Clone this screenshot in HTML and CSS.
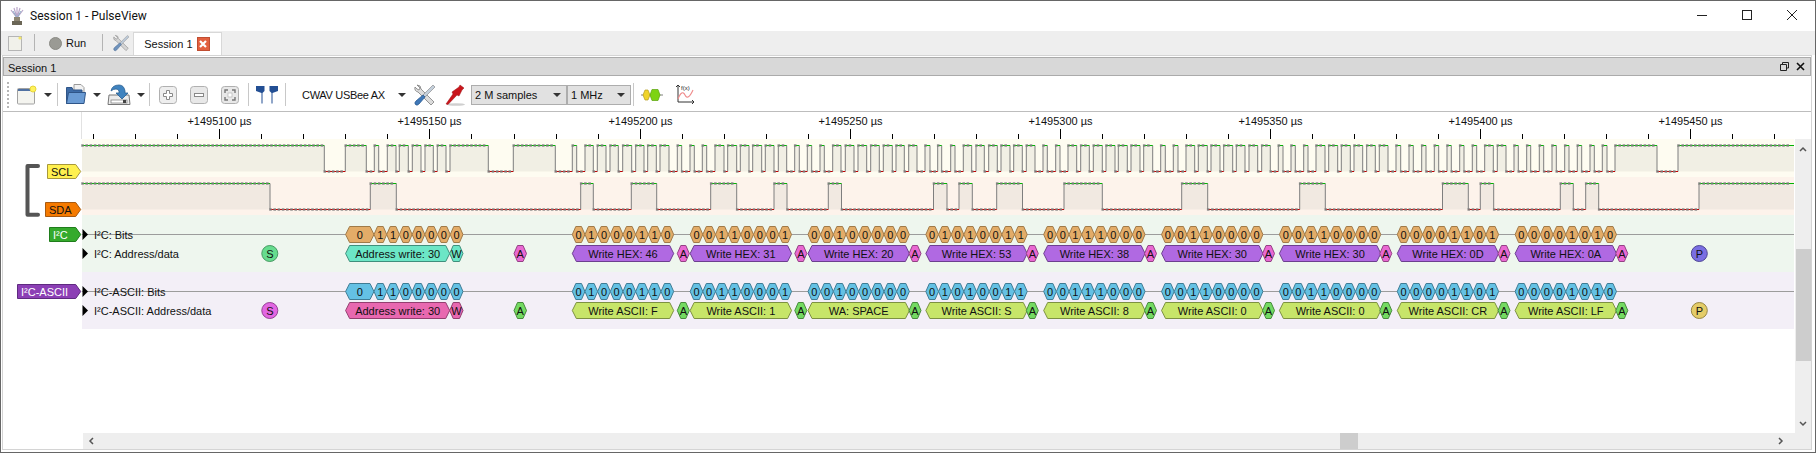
FILE: index.html
```html
<!DOCTYPE html>
<html lang="en">
<head>
    <meta charset="UTF-8">
    <title>Session 1 - PulseView</title>
    <link rel="stylesheet" href="styles.css">
</head>
<body>
<div class="window">

    <!-- Title bar -->
    <div class="titlebar">
        <svg class="app-icon" width="16" height="18" viewBox="0 0 16 18">
            <path d="M8 11 L2 3 M8 11 L5 1 M8 11 L8 0 M8 11 L11 1 M8 11 L14 3" stroke="#b9a6c9" stroke-width="1.2" fill="none"/>
            <path d="M8 11 L4 4 M8 11 L12 4" stroke="#8fb0c8" stroke-width="1" fill="none"/>
            <rect x="5" y="10" width="6" height="4" fill="#8d8672"/>
            <rect x="3" y="14" width="10" height="4" fill="#6b6656"/>
        </svg>
        <span class="title-text">Session 1 - PulseView</span>
        <div class="win-controls">
            <svg width="10" height="10" viewBox="0 0 10 10"><path d="M0 5.5H10" stroke="#222"/></svg>
            <svg width="10" height="10" viewBox="0 0 10 10"><rect x="0.5" y="0.5" width="9" height="9" fill="none" stroke="#222"/></svg>
            <svg width="10" height="10" viewBox="0 0 10 10"><path d="M0 0L10 10M10 0L0 10" stroke="#222"/></svg>
        </div>
    </div>

    <!-- Tabs -->
    <div class="tabbar">
        <svg class="tab-new" width="14" height="15" viewBox="0 0 14 15">
            <rect x="0.5" y="0.5" width="13" height="14" fill="#f1f1ea" stroke="#b5b5b5"/>
            <circle cx="12" cy="2" r="1.6" fill="#f3e66a"/>
        </svg>
        <span class="tab-sep sep-a"></span>
        <span class="run-led"></span>
        <span class="run-text">Run</span>
        <span class="tab-sep sep-b"></span>
        <svg class="tab-tools" width="16" height="18" viewBox="0 0 21 22">
            <path d="M3 1 L6 4 L5 6 L3 5 L1 3 Q0 7 4 8 L17 21 L20 18 L7 5 Q7 1 3 1Z" fill="#d4d4d4" stroke="#8c8c8c" stroke-width="0.8"/>
            <path d="M19 1 L21 3 L11 13 L9 11Z" fill="#bcc9d8" stroke="#8c8c8c" stroke-width="0.6"/>
            <path d="M9 11 L11 13 L5 20 Q3 22 1.5 20.5 Q0 19 2 17Z" fill="#6f93bd" stroke="#4d6f98" stroke-width="0.8"/>
        </svg>
        <div class="tab">
            <span>Session 1</span>
            <span class="tab-close">
                <svg width="8" height="8" viewBox="0 0 8 8"><path d="M1 1L7 7M7 1L1 7" stroke="#fff" stroke-width="2.2"/></svg>
            </span>
        </div>
    </div>

    <div class="dock">
        <div class="dock-title">
            <span class="dock-name">Session 1</span>
            <div class="dock-btns">
                <svg width="9" height="9" viewBox="0 0 9 9"><path d="M2.5 2.5V.5H8.500V6H6.500M.5 2.500H6.500V8.500H.5Z" fill="none" stroke="#222"/></svg>
                <svg width="9" height="9" viewBox="0 0 9 9"><path d="M1 1L8 8M8 1L1 8" stroke="#111" stroke-width="1.6"/></svg>
            </div>
        </div>

        <!-- Main toolbar -->
        <div class="toolbar">
            <span class="grip"></span>

            <svg class="m8" width="20" height="20" viewBox="0 0 20 20">
                <rect x="0.5" y="3.500" width="17" height="15.500" rx="1" fill="#f4f4ef" stroke="#a2a2a2"/>
                <path d="M1 5H15" stroke="#27508f" stroke-width="1.6"/>
                <circle cx="16" cy="4" r="3" fill="#fff25c" stroke="#e6d53a"/>
            </svg>
            <span class="drop m7"></span>
            <span class="sep m5"></span>

            <svg class="m7" width="22" height="21" viewBox="0 0 22 21">
                <path d="M9 .5H16L19 3.500V9H9Z" fill="#f2f2f2" stroke="#9a9a9a"/>
                <path d="M1.500 3.500H7L8 6H17V19.500H1.500Z" fill="#3d6ba6" stroke="#2f5588"/>
                <path d="M3.500 8.500H20.500L19 19.500H1.500Z" fill="#6a9bd4" stroke="#2f5588"/>
            </svg>
            <span class="drop m6"></span>

            <svg class="m6" width="24" height="22" viewBox="0 0 24 22">
                <path d="M2 11H22L23 20.500H1Z" fill="#ececec" stroke="#777"/>
                <rect x="4" y="16" width="16" height="3" fill="#fff" stroke="#777" stroke-width="0.7"/>
                <rect x="16" y="16" width="3" height="3" fill="#444"/>
                <path d="M4 7Q5 1 12 1Q17 1 18 7V9H21L15 15L9 9H12V7Q11 5 9 5Q6 5 4 7Z" fill="#3f83bf" stroke="#2a5f92" stroke-width="0.8"/>
            </svg>
            <span class="drop m6"></span>
            <span class="sep m4"></span>

            <svg class="m9" width="18" height="18" viewBox="0 0 18 18">
                <rect x="0.5" y="0.500" width="17" height="17" rx="3" fill="#eeeeee" stroke="#b0b0b0"/>
                <path d="M7.500 4.500H10.500V7.500H13.500V10.500H10.500V13.500H7.500V10.500H4.500V7.500H7.500Z" fill="#fff" stroke="#888"/>
            </svg>
            <svg class="m13" width="18" height="18" viewBox="0 0 18 18">
                <rect x="0.5" y="0.500" width="17" height="17" rx="3" fill="#e8e8e8" stroke="#b0b0b0"/>
                <rect x="4.500" y="7.500" width="9" height="3" fill="#fff" stroke="#888"/>
            </svg>
            <svg class="m13" width="18" height="18" viewBox="0 0 18 18">
                <rect x="0.5" y="0.500" width="17" height="17" rx="3" fill="#e8e8e8" stroke="#b0b0b0"/>
                <path d="M7 4H4V7M11 4H14V7M7 14H4V11M11 14H14V11" fill="none" stroke="#777" stroke-width="1.4"/>
                <rect x="7" y="7" width="4" height="4" fill="#fff" stroke="#aaa" stroke-width="0.6"/>
            </svg>
            <span class="sep m9"></span>

            <svg class="m7" width="22" height="19" viewBox="0 0 22 19">
                <path d="M0 1H8.500V6L6.500 8V18.500H5.500V8L0 6Z" fill="#234f94"/>
                <path d="M22 1H13.500V6L15.500 8V18.500H16.500V8L22 6Z" fill="#234f94"/>
            </svg>
            <span class="sep m7"></span>

            <span class="device m16">CWAV USBee AX</span>
            <span class="drop"></span>

            <svg class="m8" width="21" height="22" viewBox="0 0 21 22">
                <path d="M3 1 L6 4 L5 6 L3 5 L1 3 Q0 7 4 8 L17 21 L20 18 L7 5 Q7 1 3 1Z" fill="#dcdcdc" stroke="#7d7d7d" stroke-width="0.8"/>
                <path d="M19 1 L21 3 L11 13 L9 11Z" fill="#c4d0dc" stroke="#7d7d7d" stroke-width="0.6"/>
                <path d="M9 11 L11 13 L5 20 Q3 22 1.500 20.500 Q0 19 2 17Z" fill="#3f78b8" stroke="#2a5a92" stroke-width="0.8"/>
            </svg>
            <svg class="m10" width="20" height="22" viewBox="0 0 20 22">
                <ellipse cx="11" cy="20.500" rx="9" ry="1.300" fill="#cfcfcf"/>
                <path d="M1 20L8 10L7 8L14 3L15 1L19 4L17 6L14 12L12 11L3 20.500Z" fill="#c9151b" stroke="#9c1015" stroke-width="0.5"/>
            </svg>

            <div class="combo m6 combo-samples"><span>2 M samples</span><span class="drop"></span></div>
            <div class="combo combo-rate"><span>1 MHz</span><span class="drop"></span></div>
            <span class="sep m2"></span>

            <svg class="m7" width="22" height="14" viewBox="0 0 22 14">
                <path d="M0 7H22" stroke="#7f7f7f"/>
                <path d="M2 7L4 2H7L9 7L7 12H4Z" fill="#f0d32a" stroke="#b59c1c" stroke-width="0.7"/>
                <path d="M9 7L11 1.500H17L19 7L17 12.500H11Z" fill="#7dd313" stroke="#5aa40c" stroke-width="0.7"/>
            </svg>
            <svg class="m12" width="20" height="21" viewBox="0 0 20 21">
                <path d="M3 1V18H19M1 3L3 1L5 3M17 16L19 18L17 20" fill="none" stroke="#333" stroke-width="1"/>
                <path d="M3 15Q7 5 10 11T18 6" fill="none" stroke="#ef8b8b" stroke-width="1.100"/>
                <text class="math-label" x="6" y="6">f(x)</text>
            </svg>
        </div>

        <!-- Trace view -->
        <div class="view">
            <div class="view-main">
                <svg id="trace" class="trace" width="1792" height="321" viewBox="3 112 1792 321"></svg>
                <div class="vscroll">
                    <svg class="chev" width="8" height="6" viewBox="0 0 8 6"><path d="M1 5L4 2L7 5" fill="none" stroke="#555" stroke-width="1.500"/></svg>
                    <span class="vthumb"></span>
                    <svg class="chev chev-down" width="8" height="6" viewBox="0 0 8 6"><path d="M1 1L4 4L7 1" fill="none" stroke="#555" stroke-width="1.500"/></svg>
                </div>
            </div>
            <div class="hscroll">
                <svg class="chev" width="6" height="8" viewBox="0 0 6 8"><path d="M5 1L2 4L5 7" fill="none" stroke="#555" stroke-width="1.500"/></svg>
                <span class="hthumb"></span>
                <svg class="chev chev-right" width="6" height="8" viewBox="0 0 6 8"><path d="M1 1L4 4L1 7" fill="none" stroke="#555" stroke-width="1.500"/></svg>
            </div>
        </div>
    </div>
</div>
<script src="app.js"></script>
</body>
</html>
```
FILE: styles.css
```css
/* Window chrome */
html, body {
    margin: 0;
    height: 100%;
    overflow: hidden;
    background: #fff;
}
body {
    font-family: "Liberation Sans", Arial, sans-serif;
    font-size: 11px;
    color: #111;
}
.window {
    width: 1816px;
    height: 453px;
    box-sizing: border-box;
    border: 1px solid #666;
    display: flex;
    flex-direction: column;
}

.titlebar {
    height: 30px;
    flex: none;
    display: flex;
    align-items: center;
    padding-left: 8px;
    background: #fff;
}
.app-icon {
    margin-right: 5px;
}
.title-text {
    font-family: Roboto, sans-serif;
    font-size: 12px;
}
.win-controls {
    margin-left: auto;
    display: flex;
    gap: 35px;
    padding-right: 18px;
    padding-bottom: 2px;
}

.tabbar {
    height: 24px;
    flex: none;
    display: flex;
    align-items: flex-start;
    background: #eee;
    font-size: 11px;
}
.tab-new {
    margin: 5px 0 0 7px;
}
.tab-sep {
    width: 1px;
    height: 17px;
    margin-top: 3px;
    background: #b4b4b4;
}
.sep-a {
    margin-left: 12px;
}
.sep-b {
    margin-left: 16px;
}
.run-led {
    width: 11px;
    height: 11px;
    margin: 6px 0 0 14px;
    border-radius: 50%;
    background: #9a9a94;
    border: 1px solid #8a8a84;
}
.run-text {
    margin: 6px 0 0 4px;
}
.tab-tools {
    margin: 3px 0 0 10px;
}
.tab {
    height: 23px;
    box-sizing: border-box;
    margin: 1px 0 0 4px;
    width: 89px;
    padding-left: 10px;
    display: flex;
    align-items: center;
    gap: 4px;
    background: #fff;
    border: 1px solid #d8d8d8;
    border-bottom: 0;
}
.tab-close {
    width: 13px;
    height: 14px;
    display: flex;
    align-items: center;
    justify-content: center;
    background: #e2603f;
    border: 1px solid #c04d31;
    box-sizing: border-box;
}

/* Session dock */
.dock {
    flex: 1;
    margin: 0 3px 2px 1px;
    border: 1px solid #d4d4d4;
    display: flex;
    flex-direction: column;
    min-height: 0;
}
.dock-title {
    height: 19px;
    margin-top: 1px;
    box-sizing: border-box;
    flex: none;
    display: flex;
    align-items: center;
    justify-content: space-between;
    padding: 0 5px 0 4px;
    background: #d8d8d8;
    border: 1px solid #ababab;
}
.dock-name {
    padding-top: 2px;
}
.dock-btns {
    display: flex;
    gap: 7px;
}

.toolbar {
    height: 36px;
    flex: none;
    box-sizing: border-box;
    display: flex;
    align-items: center;
    padding-top: 2px;
    border-bottom: 1px solid #bdbdbd;
    background: #fff;
}
.grip {
    width: 2px;
    height: 26px;
    margin-left: 4px;
    background: repeating-linear-gradient(#b5b5b5 0 2px, transparent 2px 4px);
}
.sep {
    width: 1px;
    height: 23px;
    background: #c8c8c8;
}
.drop {
    width: 0;
    height: 0;
    border-left: 4px solid transparent;
    border-right: 4px solid transparent;
    border-top: 4px solid #333;
}
.device {
    width: 96px;
    flex: none;
    letter-spacing: -0.3px;
}
.combo {
    height: 20px;
    box-sizing: border-box;
    display: flex;
    align-items: center;
    justify-content: space-between;
    padding: 0 5px 0 3px;
    background: #e1e1e1;
    border: 1px solid #adadad;
}
.combo-samples {
    width: 96px;
}
.combo-rate {
    width: 64px;
}
.math-label {
    font-family: "Liberation Sans", sans-serif;
    font-size: 6px;
    fill: #222;
}

/* Toolbar spacing */
.m2 { margin-left: 2px; }
.m4 { margin-left: 4px; }
.m5 { margin-left: 5px; }
.m6 { margin-left: 6px; }
.m7 { margin-left: 7px; }
.m8 { margin-left: 8px; }
.m9 { margin-left: 9px; }
.m10 { margin-left: 10px; }
.m12 { margin-left: 12px; }
.m13 { margin-left: 13px; }
.m16 { margin-left: 16px; }

/* Trace view and scrollbars */
.view {
    flex: 1;
    display: flex;
    flex-direction: column;
    min-height: 0;
}
.view-main {
    height: 321px;
    flex: none;
    display: flex;
}
.trace {
    display: block;
    flex: none;
}
.trace text {
    font-family: "Liberation Sans", Arial, sans-serif;
    font-size: 11px;
    fill: #111;
}
.trace text.mid {
    text-anchor: middle;
}
.trace text.light {
    fill: #fff;
}
.vscroll {
    width: 16px;
    margin-top: 27px;
    background: #eee;
    display: flex;
    flex-direction: column;
    align-items: center;
}
.vscroll .chev {
    margin-top: 7px;
}
.vthumb {
    width: 15px;
    height: 112px;
    margin-top: 97px;
    background: #cdcdcd;
}
.chev {
    flex: none;
}
.vscroll .chev-down {
    margin-top: 60px;
}
.hscroll {
    height: 16px;
    margin-left: 80px;
    background: #eee;
    display: flex;
    align-items: center;
}
.hscroll .chev {
    margin-left: 5px;
}
.hthumb {
    width: 18px;
    height: 16px;
    margin-left: 1246px;
    background: #cdcdcd;
}
.hscroll .chev-right {
    margin-left: 420px;
}
```
FILE: app.js
```js
const NS = 'http://www.w3.org/2000/svg';
const svg = document.getElementById('trace');

function add(tag, attrs, text) {
    const el = document.createElementNS(NS, tag);
    for (const k in attrs) el.setAttribute(k, attrs[k]);
    if (text !== undefined) el.textContent = text;
    svg.appendChild(el);
    return el;
}

/* Ruler */
const TICK0 = 93.2, TICK_STEP = 42.03;
add('path', { d: 'M81.5 112V139', stroke: '#e2e2e2' });
let tickPath = '';
for (let i = 0; i * TICK_STEP + TICK0 < 1794; i++) {
    const x = Math.round(TICK0 + i * TICK_STEP) + 0.5;
    tickPath += 'M' + x + ' ' + (i % 5 === 3 ? 129 : 134) + 'V139';
    if (i % 5 === 3) {
        const us = 1495100 + 50 * ((i - 3) / 5);
        add('text', { x: x, y: 125, class: 'mid' }, '+' + us + ' µs');
    }
}
add('path', { d: tickPath, stroke: '#000', fill: 'none' });

/* Row backgrounds */
add('rect', { x: 82, y: 139, width: 1712, height: 38, fill: '#fefcf1' });
add('rect', { x: 82, y: 177, width: 1712, height: 38, fill: '#fdf3eb' });
add('rect', { x: 82, y: 215, width: 1712, height: 57, fill: '#eef6ee' });
add('rect', { x: 82, y: 272, width: 1712, height: 57, fill: '#f3eff7' });

/* Logic channels: spans where the line is high, in px */
const SCL_HIGH = [
    [82, 324.3], [345.3, 366.3], [374.3, 378.7], [387.3, 396], [399.3, 408.3], [412.3, 421], [425, 433.3],
    [437.3, 446], [450, 488.3], [513.3, 555.3], [572.3, 576.7], [585, 593.3], [597.3, 606], [610, 618.3],
    [622.7, 631.7], [635.7, 644], [647.7, 656.3], [660, 669], [677.3, 681.7], [690, 694.3], [702.3, 706.7],
    [715, 724], [727.7, 736.7], [740.3, 749], [752.7, 761.7], [765.3, 774], [778.3, 786.7], [794.7, 799.3],
    [807.3, 811.7], [820, 824.3], [832.7, 841], [845.3, 854], [858, 866.7], [870.7, 879.3], [883.3, 892.3],
    [896, 904.3], [908.7, 917], [925, 930], [937.7, 941.7], [950.7, 955], [963.3, 971.7], [976, 984.3],
    [988.7, 997.3], [1001, 1010], [1013.7, 1022.3], [1026.3, 1035], [1043, 1047.3], [1055.7, 1060],
    [1068, 1076.7], [1080.7, 1089.3], [1093.3, 1102.3], [1106, 1115], [1118.3, 1127.3], [1131, 1140],
    [1143.7, 1152.7], [1160.7, 1165.3], [1173.3, 1178], [1186, 1194.7], [1198.3, 1207.3], [1211, 1220],
    [1223.7, 1232.7], [1236.3, 1245], [1249, 1257.7], [1261.7, 1270.3], [1278.3, 1283], [1291, 1295.3],
    [1303.7, 1308], [1316, 1325], [1328.7, 1337.7], [1341.3, 1350.3], [1354, 1362.7], [1366.7, 1375.3],
    [1379.3, 1388], [1396, 1400.7], [1409, 1413.3], [1421.7, 1426], [1434.3, 1438.7], [1447, 1451.3],
    [1459.7, 1464], [1472.3, 1476.7], [1484.7, 1493.3], [1497.3, 1506], [1514, 1518.3], [1526.7, 1530.7],
    [1539.3, 1543.7], [1552, 1556.3], [1564.7, 1569], [1577.3, 1581.7], [1590, 1594.3], [1602.3, 1607],
    [1615, 1657], [1678, 1794]
];
const SDA_HIGH = [
    [82, 270], [370.3, 396.3], [580.7, 593.3], [631.3, 656.7], [710.7, 736.7], [774, 787], [828.3, 841.5],
    [933.5, 947], [959, 972.3], [996.7, 1022.5], [1064, 1102.3], [1181.7, 1207.7], [1299.7, 1325.3],
    [1442.5, 1468.3], [1480.3, 1493.7], [1560.3, 1573.3], [1585.7, 1598.7], [1699, 1794]
];

function channel(highs, yHigh, yLow, fillColor) {
    const SAMPLE = 4.2;
    let fill = '', edges = '', green = '', red = '', dots = '';
    const spans = [];
    highs.forEach((h, i) => {
        spans.push([h[0], h[1], yHigh]);
        const next = i + 1 < highs.length ? highs[i + 1][0] : null;
        if (next !== null) spans.push([h[1], next, yLow]);
        fill += 'M' + h[0] + ' ' + yHigh + 'H' + h[1] + 'V' + yLow + 'H' + h[0] + 'Z';
        if (i > 0) edges += 'M' + h[0] + ' ' + yHigh + 'V' + yLow;
        if (h[1] < 1794) edges += 'M' + h[1] + ' ' + yHigh + 'V' + yLow;
    });
    spans.forEach(s => {
        const seg = 'M' + s[0] + ' ' + s[2] + 'H' + s[1];
        if (s[2] === yHigh) green += seg; else red += seg;
        for (let x = s[0] + 0.2; x < s[1] - 2.5; x += SAMPLE) {
            dots += 'M' + (x - 1) + ' ' + s[2] + 'h2.6';
        }
    });
    add('path', { d: fill, fill: fillColor });
    add('path', { d: edges, stroke: '#7e7e7e', 'stroke-width': 1, fill: 'none' });
    add('path', { d: green, stroke: '#00b400', fill: 'none' });
    add('path', { d: red, stroke: '#c00000', fill: 'none' });
    add('path', { d: dots, stroke: '#7f7f7f', 'stroke-width': 2.6, 'stroke-opacity': 0.85, fill: 'none' });
}
channel(SCL_HIGH, 145.5, 171.5, '#f1efe4');
channel(SDA_HIGH, 183.5, 209.5, '#f1e9e1');

/* Decoder rows */
function hexShape(x0, x1, cy, fill, stroke, label, slope) {
    const k = slope || 3.5, h = 8;
    const pts = [[x0, cy], [x0 + k, cy - h], [x1 - k, cy - h], [x1, cy], [x1 - k, cy + h], [x0 + k, cy + h]];
    add('polygon', { points: pts.map(p => p.join(',')).join(' '), fill: fill, stroke: stroke });
    add('text', { x: (x0 + x1) / 2, y: cy + 4, class: 'mid' }, label);
}
function dot(x, cy, fill, stroke, label) {
    add('circle', { cx: x, cy: cy, r: 8, fill: fill, stroke: stroke });
    add('text', { x: x, y: cy + 4, class: 'mid' }, label);
}

const ADDR_BITS = '1100000';
const BYTES = ['01000110', '00110001', '00100000', '01010011', '00111000', '00110000', '00110000', '00001101', '00001010'];
const HEX = ['46', '31', '20', '53', '38', '30', '30', '0D', '0A'];
const ASCII = ['Write ASCII: F', 'Write ASCII: 1', 'WA: SPACE', 'Write ASCII: S', 'Write ASCII: 8', 'Write ASCII: 0', 'Write ASCII: 0', 'Write ASCII: CR', 'Write ASCII: LF'];
const ACKS = [683.3, 800.8, 915, 1032.3, 1150.5, 1268.5, 1385.8, 1504, 1621.8];
const GROUP0 = 572.3, GROUP_STEP = 117.85, BIT = 12.67;

function decoder(o) {
    add('path', { d: 'M82 ' + o.bitsY + 'H1794', stroke: '#9c9c9c' });
    [o.bitsY, o.dataY].forEach(y => {
        add('polygon', { points: '82.5,' + (y - 5.5) + ' 88,' + y + ' 82.5,' + (y + 5.5), fill: '#000' });
    });
    add('text', { x: 94, y: o.bitsY + 4 }, o.name + ': Bits');
    add('text', { x: 94, y: o.dataY + 4 }, o.name + ': Address/data');

    dot(269.8, o.dataY, o.start[0], o.start[1], 'S');
    hexShape(345.6, 374, o.bitsY, o.bit[0], o.bit[1], '0', 4);
    ADDR_BITS.split('').forEach((b, i) => {
        hexShape(374 + i * 12.71, 374 + (i + 1) * 12.71, o.bitsY, o.bit[0], o.bit[1], b);
    });
    hexShape(345.6, 449.7, o.dataY, o.addr[0], o.addr[1], 'Address write: 30', 4);
    hexShape(449.7, 463, o.dataY, o.addr[0], o.addr[1], 'W');
    hexShape(514, 526.5, o.dataY, o.ack[0], o.ack[1], 'A');

    BYTES.forEach((byte, g) => {
        const s = GROUP0 + g * GROUP_STEP;
        byte.split('').forEach((b, i) => {
            hexShape(s + i * BIT, s + (i + 1) * BIT, o.bitsY, o.bit[0], o.bit[1], b);
        });
        hexShape(s, s + 101.4, o.dataY, o.data[0], o.data[1], o.labels[g], 4);
        hexShape(ACKS[g] - 6, ACKS[g] + 6, o.dataY, o.ack[0], o.ack[1], 'A');
    });
    dot(1699.3, o.dataY, o.stop[0], o.stop[1], 'P');
}

decoder({
    name: 'I²C', bitsY: 234.5, dataY: 253.5,
    bit: ['#e3ac68', '#a07a48'], addr: ['#6ce6c6', '#3f8f7c'], data: ['#b069e2', '#6d3f8f'],
    ack: ['#e968d2', '#934284'], start: ['#66dc8e', '#489a64'], stop: ['#7a6ee2', '#4f4794'],
    labels: HEX.map(v => 'Write HEX: ' + v)
});
decoder({
    name: 'I²C-ASCII', bitsY: 291.5, dataY: 310.5,
    bit: ['#64c1e4', '#3f7c94'], addr: ['#e868b0', '#933f70'], data: ['#c7e569', '#7d9142'],
    ack: ['#74da62', '#478a3c'], start: ['#e266e2', '#944294'], stop: ['#e4cc68', '#978744'],
    labels: ASCII
});

/* Channel labels on the left */
function tag(x0, y0, y1, fill, stroke, label, light) {
    const tip = 80.7, mid = (y0 + y1) / 2;
    add('polygon', {
        points: [[x0, y0], [tip - 5, y0], [tip, mid], [tip - 5, y1], [x0, y1]].map(p => p.join(',')).join(' '),
        fill: fill, stroke: stroke
    });
    add('text', { x: x0 + 3.5, y: mid + 4, class: light ? 'light' : '' }, label);
}
add('path', { d: 'M38 166H27.500V214.700H38', fill: 'none', stroke: '#555', 'stroke-width': 4, 'stroke-linejoin': 'round', 'stroke-linecap': 'round' });
tag(47.5, 164.5, 178.5, '#fff04f', '#a8983a', 'SCL');
tag(45.5, 202.5, 216.5, '#f57a00', '#a85a10', 'SDA');
tag(49.5, 227.5, 241.5, '#35aa2c', '#1f7d1b', 'I²C', true);
tag(17.5, 284.5, 298.5, '#8c3fb5', '#5f2a80', 'I²C-ASCII', true);
```
